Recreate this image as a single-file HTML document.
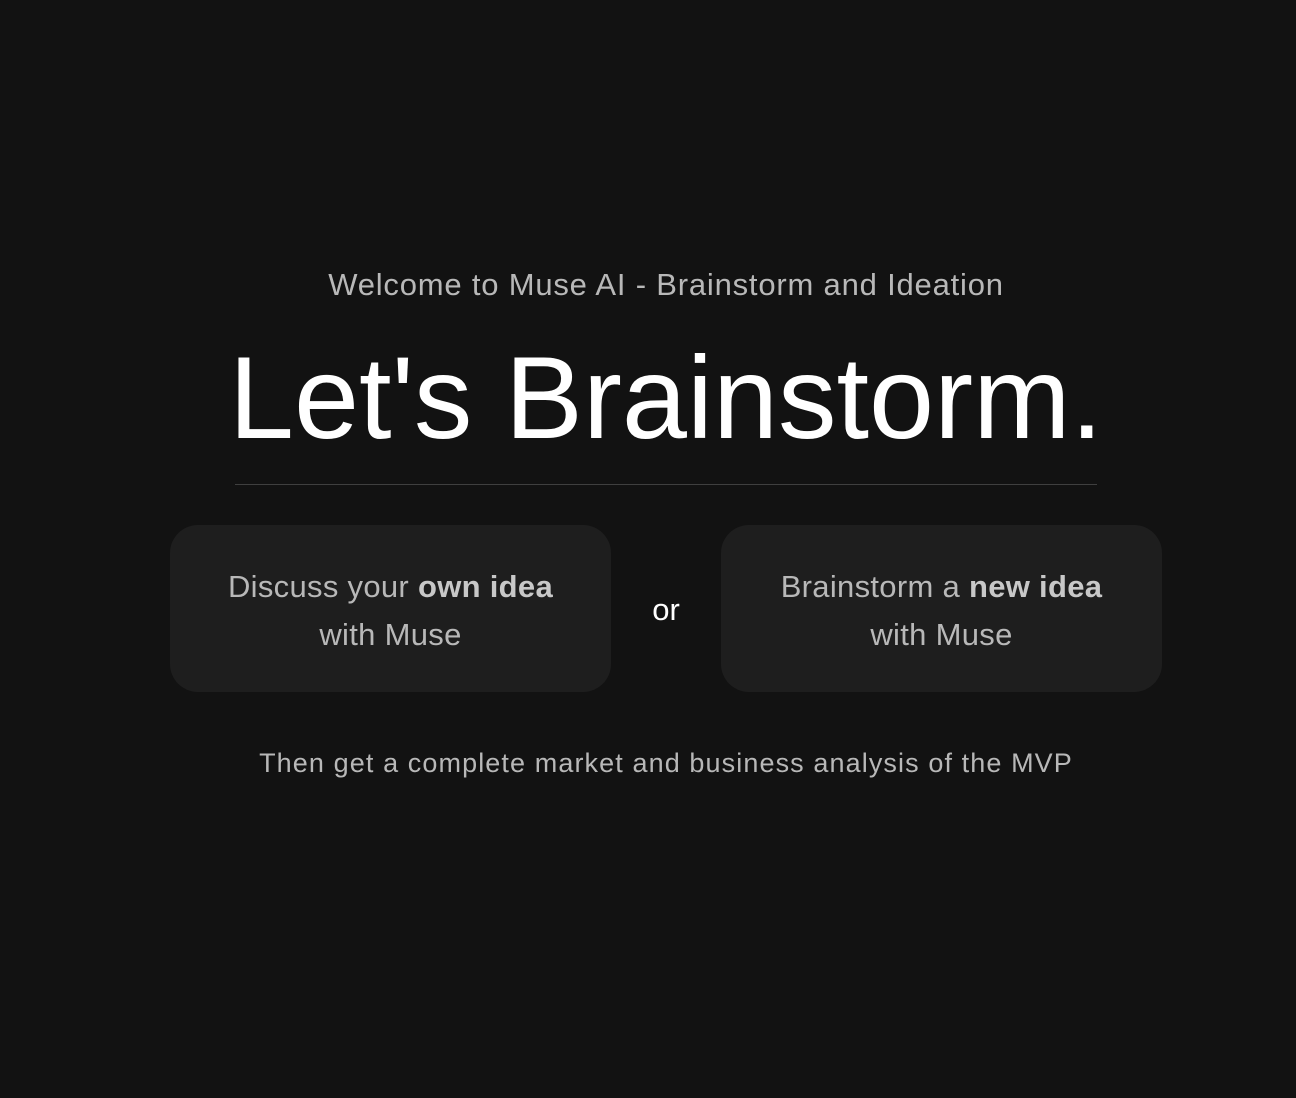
<!DOCTYPE html>
<html><head><style>
html,body{margin:0;padding:0;background:#121212;width:1296px;height:1098px;overflow:hidden;font-family:"Liberation Sans",sans-serif;}
.sub{position:absolute;top:265px;left:0;width:1332px;text-align:center;color:#b8b8b8;font-size:31px;line-height:40px;letter-spacing:0.8px;}
h1{position:absolute;top:333px;left:0;width:1332px;margin:0;text-align:center;color:#fff;font-weight:normal;font-size:117px;line-height:130px;letter-spacing:0px;}
.hr{position:absolute;top:484px;left:235px;width:862px;height:1px;background:#3f3f3f;}
.card{position:absolute;top:525px;width:441px;height:167px;background:#1e1e1e;border-radius:28px;color:#b8b8b8;font-size:31px;line-height:48px;text-align:center;box-sizing:border-box;padding-top:38px;letter-spacing:0.3px;}
.card b{color:#c8c8c8;}
.or{position:absolute;top:590px;left:611px;width:110px;text-align:center;color:#fff;font-size:31px;line-height:40px;}
.bot{position:absolute;top:745px;left:0;width:1332px;text-align:center;color:#b8b8b8;font-size:27px;line-height:36px;letter-spacing:1.1px;}
</style></head><body>
<div class="sub">Welcome to Muse AI - Brainstorm and Ideation</div>
<h1>Let's Brainstorm.</h1>
<div class="hr"></div>
<div class="card" style="left:170px">Discuss your <b>own idea</b><br>with Muse</div>
<div class="or">or</div>
<div class="card" style="left:721px">Brainstorm a <b>new idea</b><br>with Muse</div>
<div class="bot">Then get a complete market and business analysis of the MVP</div>
</body></html>
